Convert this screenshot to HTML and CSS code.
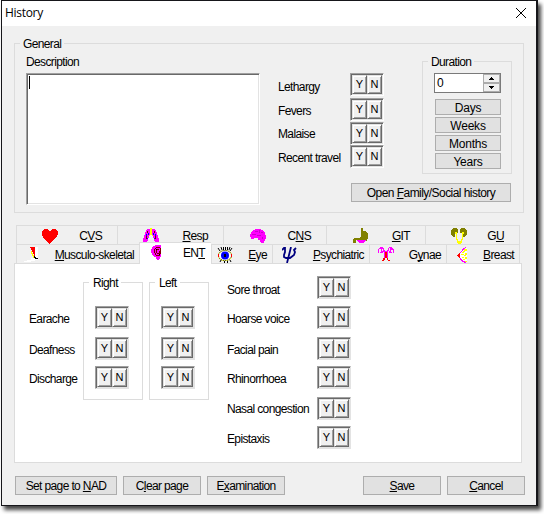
FILE: index.html
```html
<!DOCTYPE html>
<html lang="en">
<head>
<meta charset="utf-8">
<title>History</title>
<link rel="stylesheet" href="styles.css">
</head>
<body>
<main class="window">
  <header class="titlebar"><h1>History</h1>
    <svg class="close" viewBox="0 0 10 10"><path d="M0 0 10 10M10 0 0 10"/></svg>
  </header>

  <section class="group general">
    <h2 class="legend">General</h2>
    <div class="describe">
      <label>Description</label>
      <div class="memo"><i class="caret"></i></div>
    </div>
    <div class="symptoms">
      <span>Lethargy</span><div class="yn"><b>Y</b><b>N</b></div>
      <span class="up1">Fevers</span><div class="yn"><b>Y</b><b>N</b></div>
      <span class="up2">Malaise</span><div class="yn"><b>Y</b><b>N</b></div>
      <span class="up1">Recent travel</span><div class="yn"><b>Y</b><b>N</b></div>
    </div>
    <div class="side">
      <section class="group duration">
        <h2 class="legend">Duration</h2>
        <div class="spin"><span>0</span>
          <div class="arrows">
            <i><svg viewBox="0 0 5 3"><path d="M2 0h1v1h1v1h1v1H0V2h1V1h1z"/></svg></i>
            <i><svg viewBox="0 0 5 3"><path d="M0 0h5v1H4v1H3v1H2V2H1V1H0z"/></svg></i>
          </div>
        </div>
        <button>Days</button><button>Weeks</button><button>Months</button><button>Years</button>
      </section>
      <button class="family"><span>Open <u>F</u>amily/Social history</span></button>
    </div>
  </section>

  <nav class="tabs back">
    <div class="tab"><svg class="icon" viewBox="0 0 16 16"><path fill="red" d="M2 1h4v1h1v1h2V2h1V1h4v1h1v1h1v4h-1v2h-1v1h-1v1h-1v1h-1v1h-1v1H9v1H8v1H7v-1H6v-1H5v-1H4v-1H3v-1H2v-1H1V8H0V3h1V2h1z"/></svg><span>C<u>V</u>S</span></div>
    <div class="tab"><svg class="icon" viewBox="0 0 16 16"><path fill="#f0f" d="M4 1h3v6H6v3H5v3H4v2H0v-5h1V7h1V4h1V2h1zM9 1h3v1h1v2h1v3h1v3h1v5h-4v-2h-1v-3h-1V7H9z"/><path fill="#ff0" d="M7 0h2v7h1v1H9V7H7v1H6V7h1z"/><path fill="#800000" d="M4 3h1v2H4zM11 3h1v2h-1zM3 8h1v3H3zM12 8h1v3h-1z"/><path fill="#00f" d="M5 5h1v2H5zM3 6h1v2H3zM10 5h1v2h-1zM12 6h1v2h-1zM4 10h1v1H4zM11 10h1v1h-1z"/></svg><span><u>R</u>esp</span></div>
    <div class="tab"><svg class="icon" viewBox="0 0 16 16"><path fill="#f0f" d="M5 1h6v1h2v1h1v1h1v3h1v4h-1v2h-1v2h-3v-1h-1v-2H8v-2H4v1H1V9H0V6h1V4h1V3h1V2h2z"/><path fill="#c0c" d="M5 3h3v1H5zM9 2h1v3H9zM2 6h4v1H2zM7 7h4v1H7zM11 4h2v1h-2zM12 9h1v2h-1z"/></svg><span>C<u>N</u>S</span></div>
    <div class="tab"><svg class="icon" viewBox="0 0 16 16"><path fill="olive" d="M8 0h2v3h3v1h1v1h1v6h-1v2h-1v-1H3v3H0v-4h1v-1h6V9h1z"/><path fill="#f0f" d="M4 12h9v1h-1v1h-1v1H6v-1H5v-1H4z"/></svg><span><u>G</u>IT</span></div>
    <div class="tab"><svg class="icon" viewBox="0 0 16 16"><path fill="olive" d="M2 0h4v1h1v4H5v1H4v3H2V8H1V7H0V2h1V1h1zM10 0h4v1h1v1h1v5h-1v1h-1v1h-2V6h-1V5H9V1h1z"/><path fill="#ff0" d="M4 4h2v7h1v2h3v-2h1V4h2v2h-1v6h-1v3h-1v1H7v-1H6v-3H5V6H4z"/></svg><span>G<u>U</u></span></div>
  </nav>
  <nav class="tabs front">
    <div class="tab"><svg class="icon" viewBox="0 0 16 16"><path fill="#fff" d="M11 0h3v11h-3zM7 11h7v2h-3v1H7v1H0v-1h3v-1h4z"/><path fill="red" d="M6 0h5v9h-1V7H9V5H8V3H7V1H6z"/><path fill="#ff0" d="M7 4h1v2h1v2h1v3H9V9H8V7H7z"/><path d="M10 9h1v1h1v1h2v1h-3v-1h-1z"/></svg><span><u>M</u>usculo-skeletal</span></div>
    <div class="tab active"><svg class="icon" viewBox="0 0 16 16"><path fill="#f0f" d="M6 0h6v12h-1v2h-1v1H8v-1H7v-2H5v-1H4v-1H3V8H2V4h1V2h1V1h2z"/><path fill="#800000" d="M7 2h4v1H7zM6 3h1v1H6zM5 4h1v4H5zM6 8h1v2H6zM7 10h4v1H7zM11 3h1v6h-1zM8 4h2v1H8zM7 5h1v3H7zM8 8h2V6h1v3H8z"/><path d="M10 9h1v1h-1zM7 4h1v1H7z"/></svg><span>EN<u>T</u></span></div>
    <div class="tab eye"><svg class="icon" viewBox="0 0 16 16"><path stroke="#000" d="M1 1l2 3M4 0l1 3M6.500 0v3M8.500 0v3M10.500 0v3M13 0l-1 3M15 1l-2 3"/><ellipse cx="8" cy="8.500" rx="7" ry="5.500" fill="#ff0"/><ellipse cx="8" cy="8.500" rx="6.500" ry="5" fill="#fff" stroke="#000" stroke-dasharray="1 1"/><circle cx="8" cy="8.500" r="4" fill="#00f"/><path d="M7 7h2v3H7z"/><path fill="none" stroke="red" d="M1.500 7v3M14.500 7v3"/><path stroke="#000" d="M4 13l-1 2M7.500 14v2M10.500 14v2M13 13l1 2"/></svg><span><u>E</u>ye</span></div>
    <div class="tab psych"><svg class="icon" viewBox="0 0 16 16"><path fill="none" stroke="navy" stroke-width="1.8" d="M0 3 2 1h1v4L2 8v2l2 1h4l4-3 1-3-1-2 2-2M9 0 7 8 5 16"/></svg><span><u>P</u>sychiatric</span></div>
    <div class="tab gynae"><svg class="icon" viewBox="0 0 16 16"><path fill="#f0f" d="M2 0h3v1h1v2h1v1h2V3h1V1h1V0h3v1h1v1h1v4h-1V3h-2v2h1v1h-3V4h1V1h-1v3h-1v7H6V5H5V2H4v2h1v2H2V5h1V2H1v4H0V2h1V1h1z"/><path fill="red" d="M7 5h2v6h1v2h2v1h-2v-1H9v-2H7v2H6v1H4v-1h1v-2h2z"/></svg><span>G<u>y</u>nae</span></div>
    <div class="tab breast"><svg class="icon" viewBox="0 0 16 16"><path fill="#fff" d="M4 4 11 1v14H8L4 11z"/><path fill="#ff0" d="M8 2h3v2H9v1H7V4h1zM6 5h2v1H6zM9 6h2v2H9zM5 7h3v1H5zM6 10h2v1H6zM8 8h2v1H8zM9 10h2v2H9zM7 12h2v1H7zM9 14h2v1H9z"/><path fill="#f0f" d="M9 0h1v1H9v1H8v1H7v1H6v1H5v1H4V5h1V4h1V2h1V1h2zM4 11h1v1h1v1h1v1h2v1h1v1H8v-1H6v-1H5v-1H4z"/><path fill="red" d="M3 6h1v5H3v-1H2V9H1V8h1V7h1z"/></svg><span><u>B</u>reast</span></div>
  </nav>

  <section class="page">
    <div class="ear-labels"><span>Earache</span><span>Deafness</span><span>Discharge</span></div>
    <section class="group ear"><h2 class="legend">Right</h2>
      <div class="yn"><b>Y</b><b>N</b></div><div class="yn"><b>Y</b><b>N</b></div><div class="yn"><b>Y</b><b>N</b></div>
    </section>
    <section class="group ear"><h2 class="legend">Left</h2>
      <div class="yn"><b>Y</b><b>N</b></div><div class="yn"><b>Y</b><b>N</b></div><div class="yn"><b>Y</b><b>N</b></div>
    </section>
    <div class="throat">
      <span>Sore throat</span><div class="yn"><b>Y</b><b>N</b></div>
      <span class="up1">Hoarse voice</span><div class="yn"><b>Y</b><b>N</b></div>
      <span class="up1">Facial pain</span><div class="yn"><b>Y</b><b>N</b></div>
      <span class="up1">Rhinorrhoea</span><div class="yn"><b>Y</b><b>N</b></div>
      <span class="up2">Nasal congestion</span><div class="yn"><b>Y</b><b>N</b></div>
      <span class="up1">Epistaxis</span><div class="yn"><b>Y</b><b>N</b></div>
    </div>
  </section>

  <footer class="actions">
    <button class="wide"><span>Set page to <u>N</u>AD</span></button><button><span>C<u>l</u>ear page</span></button><button><span>E<u>x</u>amination</span></button>
    <button class="save"><span><u>S</u>ave</span></button><button><span><u>C</u>ancel</span></button>
  </footer>
</main>
</body>
</html>
```
FILE: styles.css
```css
* { box-sizing: border-box; }
body { margin: 0; height: 514px; background: #fff; overflow: hidden; font: 12px/14px "Liberation Sans", Arial, sans-serif; letter-spacing: -.63px; color: #000; }
.window { width: 537px; height: 506px; margin-left: 1px; border: 1px solid #16161a; border-right-width: 2px; background: #f0f0f0; box-shadow: 3px 4px 4px #444; }
.titlebar { height: 25px; background: #fff; display: flex; justify-content: space-between; padding: 5px 10px 0 3px; }
.titlebar h1 { margin: 0; font: 12px/14px "Open Sans", sans-serif; letter-spacing: -.3px; }
.close { width: 10px; height: 10px; margin-top: 2px; overflow: visible; fill: none; stroke: #000; }
u { text-decoration: underline; text-underline-offset: 1px; text-decoration-thickness: 1px; text-decoration-skip-ink: none; }
.group { border: 1px solid #dcdcdc; position: relative; }
.legend { position: absolute; top: -7px; left: 5px; margin: 0; padding: 0 3px; font: inherit; background: #f0f0f0; }
button { display: flex; align-items: center; justify-content: center; font: inherit; letter-spacing: inherit; padding: 0; color: #000; background: #e1e1e1; border: 1px solid #adadad; white-space: nowrap; }
.general { margin: 17px 0 0 12px; width: 510px; height: 170px; display: grid; grid-template-columns: 263px 144px 90px; }
.describe { padding: 11px 0 0 11px; }
.describe label { display: block; height: 18px; }
.memo { width: 234px; height: 132px; border: 1px solid; border-color: #a0a0a0 #fff #fff #a0a0a0; background: #fff; box-shadow: inset 1px 1px #696969, inset -1px -1px #e3e3e3; padding: 2px; }
.caret { display: block; width: 1px; height: 13px; background: #000; }
.symptoms { display: grid; grid-template-columns: 72px 34px; grid-template-rows: 25px 24px 23px 23px; align-content: start; padding-top: 29px; }
.symptoms span, .throat span { padding-top: 7px; }
.symptoms .up1, .throat .up1 { padding-top: 6px; }
.symptoms .up2, .throat .up2 { padding-top: 5px; }
.yn { width: 34px; height: 23px; display: flex; padding: 1px; background: #f0f0f0; border: 1px solid; border-color: #a0a0a0 #fff #fff #a0a0a0; box-shadow: inset 1px 1px #696969, inset -1px -1px #e3e3e3; }
.page .yn { border-right-color: #e3e3e3; border-bottom-color: #e3e3e3; }
.yn b { width: 15px; height: 19px; font: 11px/17px "Liberation Sans", sans-serif; letter-spacing: 0; text-align: center; border: 1px solid; border-color: #e3e3e3 #696969 #696969 #e3e3e3; box-shadow: inset 1px 1px #fff, inset -1px -1px #a0a0a0; }
.side { padding-top: 17px; }
.duration { width: 90px; height: 113px; padding: 11px 0 0 12px; }
.spin { display: flex; width: 67px; height: 20px; margin: 0 0 6px -1px; background: #fff; border: 1px solid #7a7a7a; }
.spin span { flex: 1; padding: 2px; }
.arrows { width: 17px; display: grid; grid-template-rows: 9px 9px; }
.arrows i { display: flex; align-items: center; justify-content: center; background: #f0f0f0; border: 1px solid #acacac; }
.arrows svg { width: 5px; height: 3px; }
.duration button { width: 66px; height: 16px; margin-bottom: 2px; padding-top: 1px; letter-spacing: -.2px; }
.family { width: 160px; height: 19px; margin: 9px 0 0 -71px; letter-spacing: -.55px; }
.tabs { display: grid; margin-left: 14px; width: 504px; }
.tab { display: flex; align-items: center; justify-content: space-between; border: 1px solid #dcdcdc; border-width: 1px 0 0 1px; height: 19px; }
.tab:last-child { border-right-width: 1px; }
.icon { width: 16px; height: 16px; flex: none; }
.back { margin-top: 12px; grid-template-columns: 101px 106px 103px 99px 95px; }
.front { grid-template-columns: 123px 72px 61px 97px 77px 74px; }
.back .tab { padding: 1px 15px 0 25px; }
.back .tab:nth-child(3), .back .tab:nth-child(4) { padding-left: 26px; }
.front .tab { padding: 2px 5px 0 7px; }
.front .active { background: #fff; height: 22px; margin: -2px 0 -1px; position: relative; padding: 0 6px 2px 9px; }
.front .eye { padding-left: 5px; }
.front .psych { padding-left: 9px; }
.front .gynae { padding-left: 8px; }
.front .breast { padding-left: 9px; }
.page { margin-left: 12px; width: 508px; height: 200px; background: #fff; border: 1px solid #dcdcdc; display: flex; }
.page .legend { background: #fff; padding-left: 4px; }
.ear-labels { width: 68px; padding: 48px 0 0 14px; display: grid; grid-template-rows: 31px 29px 29px; align-content: start; }
.ear { width: 60px; height: 118px; margin: 18px 6px 0 0; padding: 23px 0 0 11px; display: grid; grid-template-rows: 31px 29px 23px; align-content: start; }
.throat { display: grid; grid-template-columns: 90px 34px; grid-template-rows: 30px 31px 29px 31px 29px 23px; padding: 12px 0 0 12px; align-content: start; }
.actions { display: flex; gap: 6px; margin: 13px 0 0 13px; }
.actions button { width: 78px; height: 19px; }
.actions .wide { width: 102px; }
.actions .save { margin-left: 72px; }
```
